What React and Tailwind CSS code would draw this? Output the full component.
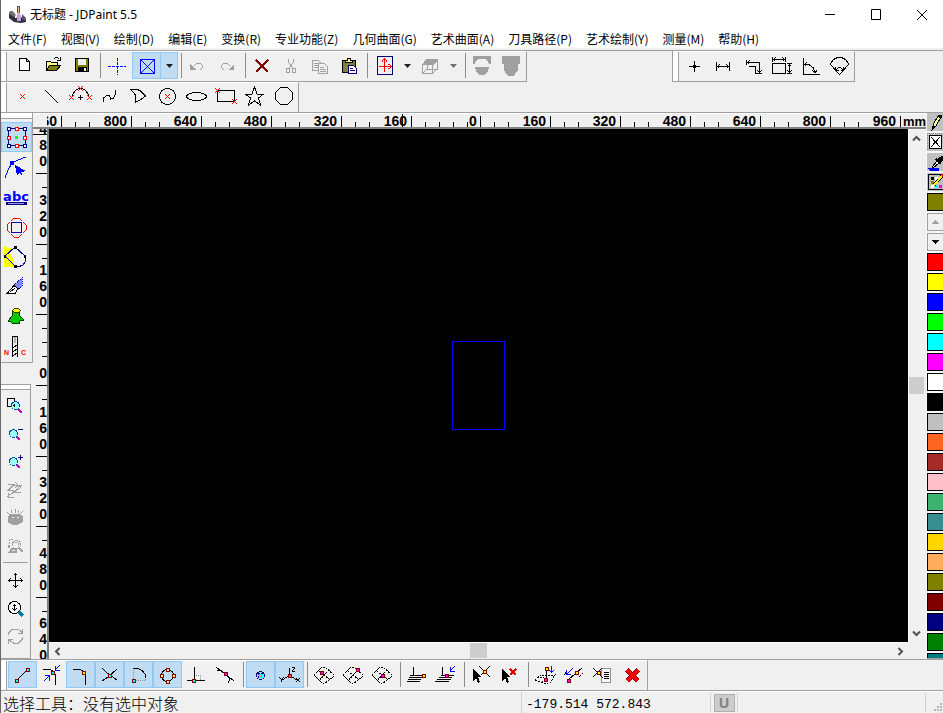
import React from "react";

const sans = "font-['Noto_Sans_CJK_SC','Noto_Sans',sans-serif]";

function Ico({ children }) {
  return (
    <svg viewBox="1 1 23 23" className="block h-[23px] w-[23px] flex-none overflow-visible" fill="none" stroke="#000" strokeWidth="1" shapeRendering="crispEdges" aria-hidden="true">
      {children}
    </svg>
  );
}

/* small square grip used on snap and edit icons */
function Node({ x, y, c = "#0ff", s = "#800000" }) {
  const left = Math.floor(x) - 1;
  const top = Math.floor(y) - 1;
  return (
    <g stroke="none">
      <rect x={left} y={top} width="4" height="4" fill={s} />
      <rect x={left + 1} y={top + 1} width="2" height="2" fill={c} />
    </g>
  );
}

/* five-pixel red cross marking a control point */
function RedX({ x, y }) {
  const cx = Math.floor(x);
  const cy = Math.floor(y);
  const dots = [[-2, -2], [-1, -1], [0, 0], [1, 1], [2, 2], [2, -2], [1, -1], [-1, 1], [-2, 2]];
  return (
    <g stroke="none" fill="#f00">
      {dots.map(([dx, dy]) => (
        <rect key={`${dx},${dy}`} x={cx + dx} y={cy + dy} width="1" height="1" />
      ))}
    </g>
  );
}

const G = "#a0a0a0";

const icons = {
  new: <path d="M7.5 4.5h7l3 3v9h-10zM14.5 4.5v3h3" fill="#fff" />,
  open: (
    <>
      <path d="M5.5 16.5v-9h4l1 1h6v3h-8z" fill="#ffff80" />
      <path d="M5.5 16.5l3-5h11l-4 5z" fill="#808000" />
      <path d="M12.5 5.5l2-2h2l2 2M19.5 3v4M16 6.5h3" />
    </>
  ),
  save: (
    <>
      <rect x="5.5" y="4.5" width="13" height="13" fill="#808000" />
      <rect x="8" y="5" width="8" height="6" fill="#f0f0f0" stroke="none" />
      <rect x="8" y="13" width="9" height="5" fill="#000" stroke="none" />
      <rect x="14" y="14" width="2" height="3" fill="#f0f0f0" stroke="none" />
    </>
  ),
  cross: <path d="M3 12.5h18M12.5 4v17" stroke="#00f" strokeDasharray="3 1" />,
  box: <path d="M6.5 5.5h14v14h-14zM6.5 5.5l14 14M20.5 5.5l-14 14" stroke="#00f" />,
  undo: (
    <g stroke={G}>
      <path d="M4 10v6h6z" fill={G} stroke="none" />
      <path d="M7.500 12.500l3-3h4l2 2v2l-3 3" />
    </g>
  ),
  redo: (
    <g stroke={G}>
      <path d="M19 10v6h-6z" fill={G} stroke="none" />
      <path d="M15.500 12.500l-3-3h-4l-2 2v2l3 3" />
    </g>
  ),
  del: <path d="M6 6l12 12M18 6L6 18" stroke="#800000" strokeWidth="2" />,
  cut: (
    <g stroke={G}>
      <path d="M9.5 5v3l4 6M14.5 5v3l-4 6" />
      <rect x="7.5" y="14.5" width="3" height="4" />
      <rect x="13.5" y="14.5" width="3" height="4" />
    </g>
  ),
  copy: (
    <g stroke={G} fill="#f0f0f0">
      <path d="M4.5 6.5h6l3 3v7h-9zM6 9.5h4M6 11.5h6M6 13.5h6" />
      <path d="M10.5 9.5h6l3 3v7h-9zM12 13.5h4M12 15.5h6M12 17.5h6" />
    </g>
  ),
  paste: (
    <>
      <rect x="5.5" y="6.5" width="13" height="12" fill="#808040" />
      <path d="M8.5 8.5v-2h2v-2h3v2h2v2z" fill="#ffff80" />
      <path d="M11.5 11.5h5l3 3v5h-8z" fill="#fff" stroke="#000080" />
      <path d="M13 14.5h3M13 16.5h5" stroke="#000080" />
    </>
  ),
  axes: (
    <>
      <rect x="5.5" y="2.5" width="15" height="18" fill="#f0f0f0" stroke="#000080" />
      <path d="M7 12.5h12M12.5 5v13M10 7.5l2.5-3 2.5 3M16.5 10l3 2.5-3 2.5" stroke="#f00" />
    </>
  ),
  cube: (
    <>
      <path d="M5 10l4-5h11l-4 5z" fill={G} stroke={G} />
      <path d="M4.5 10.5h10v9h-10zM14.5 19.5l5-5v-9M9.5 6v9h10M9.5 14.5l-5 5" stroke={G} />
    </>
  ),
  halfMask: (
    <g stroke="none" fill={G}>
      <path d="M3 2h18v8h-2l-1-3-3-2h-6l-3 2-1 3H3z" />
      <path d="M5 13h14l-1 4-3 4h-6l-3-4z" />
    </g>
  ),
  mask: <path d="M3 2h18v8h-2v6l-3 4-2 2h-4l-4-3-1-4V10H3z" fill={G} stroke="none" />,
  /* drawing tools */
  point: <RedX x={12.5} y={12.5} />,
  line: <path d="M6 6l13 13" />,
  arc: (
    <>
      <path d="M4.500 12.500v-2l3-4 3-2h4l3 2 3 4v2M10 13.5h5M12.5 11v5" />
      <RedX x={3.5} y={13.5} />
      <RedX x={12.5} y={4.5} />
      <RedX x={21.5} y={13.5} />
    </>
  ),
  spline: <path d="M6.500 18v-4l4-3h2l1 4 3-1 2-4v-4" />,
  poly: <path d="M5 5.5h6l3 1 5 5v1l-4 3-6 3v-8z" />,
  circle: (
    <>
      <circle cx="12.5" cy="12.5" r="8" />
      <RedX x={12.5} y={12.5} />
    </>
  ),
  ellipse: <ellipse cx="12.500" cy="12.5" rx="10" ry="4" />,
  rect: (
    <>
      <rect x="4.5" y="6.5" width="17" height="11" />
      <RedX x={4.5} y={6.5} />
      <RedX x={21.5} y={17.5} />
    </>
  ),
  star: <path d="M12.5 3l2.5 7h6.500l-5 4 2 7-6-4-6 4 2-7-5.500-4h7z" />,
  octagon: <path d="M9.500 3.500h7l5 5v7l-5 5h-7l-5-5v-7z" />,
  /* measuring tools */
  mPoint: <path d="M7 12.500h11M12.500 7v11M11.500 11.500h2v2h-2z" />,
  mWidth: <path d="M5.500 8v9M18.500 8v9M6 12.500h12M8.500 10.500l-2 2 2 2M15.500 10.500l2 2-2 2" />,
  mCorner: <path d="M6.500 6v5M7 8.500h12.500V19M9.500 6.500l-2 2 2 2M17.500 16.500l2 2 2-2M16 19.500h6M9 12.500h6.500v7" />,
  mRect: <path d="M3.500 9.500h13v10h-13zM3.500 3v5M16.500 3v5M4 5.500h12M6.500 3.500l-2 2 2 2M13.500 3.500l2 2-2 2M18 9.500h5M18 19.500h5M20.500 10v9M18.500 12.500l2-2 2 2M18.500 16.500l2 2 2-2" />,
  mAngle: <path d="M5.500 4v16.500H22M6 10.500h5l4 3 2 5M8.500 8.500l-2 2 2 2M14.500 16.500l2.500 2.500 2-3" />,
  mFan: <path d="M3.500 10.500v-1l3-4 4-2h4l4 2 3 4v1l-9 10zM8.500 13v3h3M16.500 13v3h-3M9 15.500l3-2h1l3 2" />,
  /* left toolbox */
  select: (
    <>
      <rect x="4.500" y="3.500" width="17" height="17" stroke="#000080" />
      {[[4.5, 3.5], [20.5, 3.5], [4.5, 20.5], [20.5, 20.5]].map(([x, y]) => (
        <Node key={`${x}-${y}`} x={x} y={y} c="#fff" s="#000080" />
      ))}
      {[[12.5, 3.5], [4.5, 12], [20.5, 12], [12.5, 20.5]].map(([x, y]) => (
        <Node key={`${x}-${y}`} x={x} y={y} c="#fff" s="#f00" />
      ))}
      <rect x="11" y="11" width="3" height="3" fill="#0f0" stroke="none" />
    </>
  ),
  nodeEdit: (
    <>
      <path d="M1 23l3-8 4-7 6-3 8-3" stroke="#00f" />
      <rect x="6" y="6" width="4" height="4" fill="#00f" stroke="none" />
      <path d="M11 10l11 6-5 1 2 5-3-4-3 2z" fill="#00f" stroke="none" />
    </>
  ),
  text: (
    <>
      <text x="12" y="16" textAnchor="middle" fill="#00f" stroke="none" className="font-['DejaVu_Sans',sans-serif] text-[13px] font-bold">abc</text>
      <rect x="2" y="17" width="21" height="3" rx="1" fill="#000080" stroke="none" />
      <path d="M4 18.500h16" stroke="#99f" />
    </>
  ),
  transform: (
    <>
      <rect x="7.500" y="7.500" width="10" height="10" stroke="#0000c0" />
      <path d="M7 6l3-3h5l3 3M19 7l3 3v5l-3 3M18 19l-3 3h-5l-3-3M6 18l-3-3v-5l3-3" stroke="#f00" />
    </>
  ),
  region: (
    <>
      <path d="M0 1l8 3-2 4 4 8-2 2 3 4H0z" fill="#ff0" stroke="none" />
      <path d="M11 2l10 9 1 5-3 4-5 2-3-1-10-10z" stroke="#0000a0" />
      <path d="M10 1h3v3h-3zM0 10h2v3H0zM20 10h2v3h-2zM10 20h3v3h-3z" fill="#000" stroke="none" />
    </>
  ),
  knife: (
    <>
      <path d="M10 10l8-7v8l-4 4z" fill="#8088ff" stroke="#0000c0" strokeDasharray="1 1" />
      <path d="M3 18.500l7-8 4 3-3 5z" fill="#fff" />
      <path d="M6 17l5-4" />
    </>
  ),
  relief: (
    <>
      <path d="M9 6h6l1 5 4 4-4 1-1 3-3-1-3 1-2-2-3-1 4-5z" fill="#00c800" stroke="#004000" />
      <path d="M8.500 5.500l2-2h4l2 2-2 2h-4z" fill="#ff0" stroke="#404000" />
    </>
  ),
  nc: (
    <>
      <path d="M8.500 1v21M13.500 1v21M8.500 1.500h5" />
      <path d="M9 13l4-3M9 17l4-3M9 21l4-3" />
      <path d="M10 2h2v6h-2z" fill="#b0b0b0" stroke="none" />
      <text x="0" y="20" fill="#f00" stroke="none" className="font-['Liberation_Sans',sans-serif] text-[7px] font-bold">N</text>
      <text x="17" y="20" fill="#f00" stroke="none" className="font-['Liberation_Sans',sans-serif] text-[7px] font-bold">C</text>
    </>
  ),
  zoomWin: (
    <>
      <path d="M4.500 5.500h7v8h-7z" />
      <path d="M15 16l4 4" stroke="#c000c0" strokeWidth="2" />
      <circle cx="12.500" cy="12.500" r="4" fill="#9ff" stroke="#0050a0" />
      <path d="M12 10v5l-2-2z" fill="#000" stroke="none" />
    </>
  ),
  zoomOut: (
    <>
      <path d="M13 15l4 4" stroke="#c000c0" strokeWidth="2" />
      <circle cx="10.500" cy="12.500" r="4" fill="#9ff" stroke="#0050a0" />
      <path d="M15 8.500h5" stroke="#000080" />
    </>
  ),
  zoomIn: (
    <>
      <path d="M13 15l4 4" stroke="#c000c0" strokeWidth="2" />
      <circle cx="10.500" cy="12.500" r="4" fill="#9ff" stroke="#0050a0" />
      <path d="M15 8.500h5M17.500 6v5" stroke="#000080" />
    </>
  ),
  zz: <path d="M5 7.500h6l-6 6h6M10 8.500h8l-8 7h8M4 19.500l14-9M5.500 16v4h5M12.500 5.500l3 3-3 2" stroke={G} />,
  eye: (
    <>
      <path d="M5 12l4-3h7l4 3-1 5-4 2H9l-4-2z" fill={G} stroke={G} />
      <path d="M4 7l3 3M8 5l1 3M12.500 4v4M16 5l-1 3M20 6l-3 3" stroke={G} />
      <path d="M9 12.500h2M14 12.500h2" stroke="#f0f0f0" />
    </>
  ),
  lensGray: (
    <>
      <circle cx="13.500" cy="11.500" r="4" stroke={G} />
      <path d="M16 15l4 4M7 19h6v-3H9z" stroke={G} strokeWidth="2" />
      <path d="M10 6.500H6.500v7M5 11.500v3h3M12 9.500h3v4" stroke={G} strokeDasharray="2 1" />
    </>
  ),
  move: <path d="M12.500 5v15M5 12.500h15M10.500 7.500l2-2 2 2M10.500 17.500l2 2 2-2M7.500 10.500l-2 2 2 2M17.500 10.500l2 2-2 2" />,
  zoomDyn: (
    <>
      <path d="M15 15l5 5" stroke="#0080a0" strokeWidth="3" />
      <circle cx="11.500" cy="11.500" r="6" fill="#f8f8f8" />
      <path d="M11.500 8v7M9.500 10.500l2-2 2 2M9.500 12.500l2 2 2-2" />
    </>
  ),
  refresh: <path d="M5.500 11v-2l4-4h5l3 2 2 2M19.500 5v4.500H15M19.500 13v2l-4 4h-5l-3-2-2-2M5.500 20v-5H10" stroke={G} />,
  /* snap tools */
  sEnd: (
    <>
      <path d="M7 17L17 7" />
      <Node x={6.5} y={17.5} />
      <Node x={17.5} y={6.5} />
    </>
  ),
  sNear: (
    <>
      <path d="M4 6.500h7l4 2 1.500 4v9" />
      <path d="M21 2l-4 4M16.500 3v4H21M5 18l5-5M6 12.500h4.500v5" stroke="#00f" />
      <Node x={13.5} y={9.500} />
    </>
  ),
  sCorner: (
    <>
      <path d="M5 6.500h7l4 2 1.500 4v9" />
      <Node x={15.5} y={9.500} c="#ff0" />
    </>
  ),
  sCross: (
    <>
      <path d="M5 5l5 5 10 7M5 18l6-4 9-8" />
      <Node x={12.5} y={12.500} />
    </>
  ),
  sArc: (
    <>
      <path d="M7.500 7v10M8 17.500h11.500v-6" stroke="#909090" strokeDasharray="1 1" />
      <path d="M7 5.500h5l4 2 3.500 4v3" />
      <Node x={7.5} y={17.500} />
    </>
  ),
  sQuad: (
    <>
      <circle cx="12.500" cy="12.500" r="6" />
      <Node x={12.5} y={6.500} c="#ff8" />
      <Node x={6.5} y={12.500} c="#ff8" />
      <Node x={18.5} y={12.500} c="#ff8" />
      <Node x={12.5} y={18.500} c="#ff8" />
    </>
  ),
  sPerp: (
    <>
      <path d="M10.500 4v12M3 17.500h18" />
      <path d="M12 12.500h4.500v4" stroke="#909090" strokeDasharray="1 1" />
      <Node x={9.5} y={17.500} />
    </>
  ),
  sTan: (
    <>
      <path d="M3 4l18 14M4 7.500h4l5 4 3.500 4-1 5" />
      <Node x={12.5} y={10.500} c="#f0f" />
    </>
  ),
  sCenter: (
    <>
      <circle cx="12.500" cy="12.500" r="4" fill="#b0d8ff" stroke="#000080" />
      <path d="M10 10l5 5M15 10l-5 5" stroke="#000080" strokeWidth="2" />
      <Node x={12} y={12} c="#f88" s="#0ff" />
    </>
  ),
  sAxis: (
    <>
      <path d="M12.500 5v7l-7 5M12.500 12l7 5M15 4.500h3M15 8.500h3M17.500 5l-2 3M2 14l2.500 2.500L7 14M4.500 16v3M19 15l4 4M23 15l-4 4" />
      <Node x={12} y={12} c="#f44" />
    </>
  ),
  sWork: (
    <>
      <path d="M8.500 4v9" />
      <path d="M5 12.500h13M4 14.500h13M3 16.500h13M2 18.500h13" />
      <Node x={18.500} y={12.500} c="#ff0" />
    </>
  ),
  sProj: (
    <>
      <path d="M8.500 4v9M7 12.500h13M5 14.500h13M3 16.500h14M1 18.500h14" />
      <path d="M21 3l-5 5M16.500 4v4h4" stroke="#00f" />
      <Node x={12.500} y={12} c="#f0f" />
    </>
  ),
  pick: (
    <>
      <path d="M10 3l11 11M21 3l-9 9" />
      <path d="M4 6l8 8H9l2 5-2 1-2-5-3 3z" fill="#000" stroke="none" />
      <Node x={15.500} y={8.500} c="#ff0" />
    </>
  ),
  unpick: (
    <>
      <path d="M4 6l8 8H9l2 5-2 1-2-5-3 3z" fill="#000" stroke="none" />
      <path d="M12 6l6 6M18 6l-6 6" stroke="#e00000" strokeWidth="2" />
    </>
  ),
  dropPt: (
    <>
      <path d="M13.500 7v8" />
      <path d="M2 17l6-5 4 1 10-1-5 8-3 1-6-2zM7 15l4-1M9 19l4-5" strokeDasharray="2 1" />
      <path d="M18.500 3v7M16.500 7.500l2 2 2-2" stroke="#00f" />
      <Node x={12.500} y={16.500} c="#f0f" />
      <Node x={13} y={5} c="#ff0" />
    </>
  ),
  onLine: (
    <>
      <path d="M6 17L20 5" />
      <path d="M2 12l3-4M17 14l4-4" strokeDasharray="1 1" />
      <path d="M11 5l-6 6M4.500 7v4.500H9" stroke="#00f" />
      <Node x={6.500} y={17.500} c="#f0f" />
      <Node x={14.500} y={9.500} c="#ff0" />
    </>
  ),
  props: (
    <>
      <path d="M10.500 5.500h9v14h-9z" fill="#f8f8f8" stroke="#909090" />
      <path d="M13 9.500h5M13 11.500h5M13 13.500h5M13 15.500h5M2 5l10 10M2 14l9-9" />
      <Node x={7} y={9} c="#ff0" />
    </>
  ),
  close: (
    <>
      <path d="M7 7l11 11M18 7L7 18" stroke="#800000" strokeWidth="5" />
      <path d="M7 7l11 11M18 7L7 18" stroke="#f00" strokeWidth="4" />
    </>
  ),
};

function meshIcon(x, y) {
  return (
    <>
      <path d="M2 12l3-3 5-5 4 1 7 6 1 2-10 8-4-3zM7 8l5 4 6 5M17 7l-5 5-5 6" strokeDasharray="2 1" />
      <Node x={x} y={y} c="#f0f" />
    </>
  );
}
icons.mesh1 = meshIcon(9, 9);
icons.mesh2 = meshIcon(16, 6);
icons.mesh3 = meshIcon(12, 12);

function Tool({ icon, label, on, className = "h-[27px] w-[29px] items-end" }) {
  return (
    <button
      type="button"
      aria-label={label}
      aria-pressed={!!on}
      className={`flex flex-none justify-center border ${on ? "border-[#90c8f6] bg-[#c0dcf3]" : "border-transparent"} ${className}`}
    >
      <Ico>{icons[icon]}</Ico>
    </button>
  );
}

function Drop({ label, on, dim }) {
  return (
    <button
      type="button"
      aria-label={label}
      className={`flex h-[27px] w-[17px] flex-none items-center justify-center border ${on ? "border-l-0 border-[#90c8f6] bg-[#c0dcf3]" : "border-transparent"}`}
    >
      <svg viewBox="0 0 7 4" className="block h-1 w-[7px]" fill={dim ? "#707070" : "#202020"} aria-hidden="true">
        <path d="M0 0h7L3.500 4z" />
      </svg>
    </button>
  );
}

function Sep() {
  return (
    <span className="flex h-[27px] w-[6px] flex-none items-center justify-center">
      <span className="h-[25px] w-px bg-[#8c8c8c]" />
    </span>
  );
}

/* items: [icon, label, pressed], "|" for a divider, ["v", label, pressed, dim] for a drop arrow */
function Tools({ items, toolClass }) {
  return items.map((it, i) => {
    if (it === "|") return <Sep key={i} />;
    if (it[0] === "v") return <Drop key={i} label={it[1]} on={it[2]} dim={it[3]} />;
    return <Tool key={i} icon={it[0]} label={it[1]} on={it[2]} className={toolClass} />;
  });
}

function Bar({ items, label, pad = "", toolClass }) {
  return (
    <div role="toolbar" aria-label={label} className="flex h-[31px] border-b border-t border-r border-b-[#a0a0a0] border-r-[#a0a0a0] border-t-white">
      <span className="mr-px w-[6px] flex-none border-r border-[#a0a0a0] bg-white" />
      <div className={`flex items-start ${pad}`}>
        <Tools items={items} toolClass={toolClass} />
      </div>
    </div>
  );
}

const standard = [
  ["new", "新建"], ["open", "打开"], ["save", "保存"], "|",
  ["cross", "十字光标"], ["box", "选择框", true], ["v", "选择框选项", true], "|",
  ["undo", "撤销"], ["redo", "重做"], "|",
  ["del", "删除"], ["cut", "剪切"], ["copy", "复制"], ["paste", "粘贴"], "|",
  ["axes", "坐标"], ["v", "坐标选项"], ["cube", "视图"], ["v", "视图选项", false, true], "|",
  ["halfMask", "半遮罩"], ["mask", "遮罩"],
];
const drawing = [
  ["point", "点"], ["line", "直线"], ["arc", "圆弧"], ["spline", "样条"], ["poly", "多边线"],
  ["circle", "圆"], ["ellipse", "椭圆"], ["rect", "矩形"], ["star", "星形"], ["octagon", "多边形"],
];
const measuring = [
  ["mPoint", "点坐标"], ["mWidth", "距离"], ["mCorner", "折线"], ["mRect", "尺寸"], ["mAngle", "角度"], ["mFan", "扇形"],
];
const snapping = [
  ["sEnd", "端点", true], ["sNear", "最近点"], ["sCorner", "拐点", true], ["sCross", "交点", true],
  ["sArc", "圆心", true], ["sQuad", "象限点", true], ["sPerp", "垂足"], ["sTan", "切点"], "|",
  ["sCenter", "中心", true], ["sAxis", "坐标轴", true], "|",
  ["mesh1", "曲面点"], ["mesh2", "曲面角点"], ["mesh3", "曲面中心"], "|",
  ["sWork", "工作面"], ["sProj", "投影"], "|",
  ["pick", "拾取"], ["unpick", "取消拾取"], "|",
  ["dropPt", "落点"], ["onLine", "线上点"], ["props", "属性"], ["close", "关闭"],
];

const menus = [
  "文件(F)", "视图(V)", "绘制(D)", "编辑(E)", "变换(R)", "专业功能(Z)",
  "几何曲面(G)", "艺术曲面(A)", "刀具路径(P)", "艺术绘制(Y)", "测量(M)", "帮助(H)",
];

const topScale = ["800", "640", "480", "320", "160", "0", "160", "320", "480", "640", "800", "960"];
const sideScale = [
  ["320", "h-[71px]"], ["160", "h-[70px]"], ["0", "h-[71px]"], ["160", "h-[71px]"],
  ["320", "h-[70px]"], ["480", "h-[71px]"], ["640", "h-[70px]"],
];

const palette = [
  "bg-[#ff0000]", "bg-[#ffff00]", "bg-[#0000ff]", "bg-[#00ff00]", "bg-[#00ffff]", "bg-[#ff00ff]", "bg-white",
  "bg-black", "bg-[#c0c0c0]", "bg-[#ff6622]", "bg-[#a52a2a]", "bg-[#ffc0cb]", "bg-[#3cb371]", "bg-[#388e8e]",
  "bg-[#ffd700]", "bg-[#ffad5c]", "bg-[#808000]", "bg-[#800000]", "bg-[#000080]", "bg-[#008000]", "bg-[#008080]",
];

function TopRuler() {
  return (
    <div className="relative flex h-4 items-end overflow-hidden border-b-2 border-t border-b-[#808080] border-t-white font-['Liberation_Sans',sans-serif] text-sm font-bold leading-[11px]">
      <div className="flex h-[11px] w-[29px] flex-none justify-end overflow-hidden border-r border-black pl-[14px]">
        <span className="flex w-[14px] justify-end overflow-hidden pr-1">960</span>
      </div>
      {topScale.map((n, i) => (
        <div key={i} className={`flex h-[11px] flex-none items-end border-r border-black ${n === "0" ? "w-[69px]" : "w-[70px]"}`}>
          {(n === "0" ? [1, 2, 3, 4] : [1, 2]).map((t) => (
            <span key={t} className="h-[5px] w-[14px] flex-none border-r border-black" />
          ))}
          <span className={n === "0" ? "pl-px" : "ml-auto pr-1"}>{n}</span>
        </div>
      ))}
      <span className="pl-0.5 text-[13px]">mm</span>
      <span className="absolute left-[369px] top-0 h-4 w-px bg-black" />
    </div>
  );
}

function Digits({ n }) {
  return (
    <span className="mt-auto flex flex-col pb-1 text-center leading-4">
      {n.split("").map((d, i) => (
        <span key={i}>{d}</span>
      ))}
    </span>
  );
}

function SideRuler() {
  return (
    <div className="relative flex w-4 flex-none flex-col overflow-hidden border-r-2 border-[#808080] pl-[3px] font-['Liberation_Sans',sans-serif] text-sm font-bold">
      <div className="flex h-[45px] flex-none flex-col items-end justify-end border-b border-black">
        <Digits n="480" />
      </div>
      {sideScale.map(([n, h], i) => (
        <div key={i} className={`flex flex-none flex-col items-end border-b border-black ${h}`}>
          {(n === "0" ? [1, 2, 3] : [1]).map((t) => (
            <span key={t} className="h-[14px] w-[5px] flex-none border-b border-black" />
          ))}
          <Digits n={n} />
        </div>
      ))}
      <span className="absolute left-0 top-[5px] h-px w-4 bg-black" />
    </div>
  );
}

function Arrow({ d, label, className }) {
  return (
    <button type="button" aria-label={label} className={`flex flex-none items-center justify-center ${className}`}>
      <svg viewBox="0 0 9 9" className="block h-[9px] w-[9px]" fill="none" stroke="#505050" strokeWidth="2" aria-hidden="true">
        <path d={d} />
      </svg>
    </button>
  );
}

function PaletteTool({ label, className = "bg-[#c0c0c0]", children }) {
  return (
    <button type="button" aria-label={label} className={`flex h-[18px] w-[18px] flex-none items-center justify-center ${className}`}>
      <svg viewBox="0 0 18 18" className="block h-[18px] w-[18px] flex-none" fill="none" stroke="#000" shapeRendering="crispEdges" aria-hidden="true">
        {children}
      </svg>
    </button>
  );
}

function Palette() {
  return (
    <div className="flex w-4 flex-none flex-col gap-[2px] overflow-hidden border-b border-[#a0a0a0] bg-[#f8f8f8]">
      <PaletteTool label="画笔">
        <path d="M6 12l5-9 3 1-5 9-3 3z" fill="#ff8" />
        <path d="M11 3l1-1 3 1-1 2z" fill="#800000" />
        <path d="M5 17l1-4 2 1z" fill="#000" />
      </PaletteTool>
      <PaletteTool label="无填充">
        <rect x="2.500" y="2.500" width="12" height="13" fill="#fff" />
        <path d="M4 4l9 10M13 4L4 14" />
        <path d="M0 .5h18M.5 0v18" stroke="#808080" strokeDasharray="1 1" />
      </PaletteTool>
      <PaletteTool label="吸管">
        <path d="M1 15h10v2H3z" fill="#00f" stroke="#00f" />
        <path d="M5 14l5-6 2 2-6 5z" fill="#fff" />
        <path d="M9 6l5 5M12 6l3-2 1 1-2 3z" fill="#000" strokeWidth="2" />
      </PaletteTool>
      <PaletteTool label="调色板">
        <rect x="1.500" y="1.500" width="15" height="15" fill="#c0c0c0" />
        <path d="M4 4h3v3H4z" fill="#000" stroke="none" />
        <path d="M4 8h3v3H4z" fill="#808000" stroke="none" />
        <path d="M8 4h3v3H8zM4 12h3v3H4z" fill="#fff" stroke="none" />
        <path d="M8 12h3v3H8z" fill="#0ff" stroke="none" />
        <path d="M12 12h3v3h-3z" fill="#f0f" stroke="none" />
        <path d="M7 12l8-9" strokeWidth="3" />
        <path d="M7 12l8-9" stroke="#ff0" strokeWidth="2" />
        <path d="M15 1h3v3h-3z" fill="#f00" stroke="none" />
      </PaletteTool>
      <button type="button" aria-label="当前颜色" className="h-[18px] w-[18px] flex-none border border-black bg-[#808000]" />
      <PaletteTool label="上一页" className="border border-[#a0a0a0] bg-[#f0f0f0]">
        <path d="M5 10.500h7M6 9.500h5M7 8.500h3M8 7.500h1" stroke="#a0a0a0" />
      </PaletteTool>
      <PaletteTool label="下一页" className="border border-[#a0a0a0] bg-[#f0f0f0]">
        <path d="M5 7.500h7M6 8.500h5M7 9.500h3M8 10.500h1" />
      </PaletteTool>
      {palette.map((c) => (
        <button key={c} type="button" aria-label="颜色" className={`h-[18px] w-[18px] flex-none border border-black ${c}`} />
      ))}
    </div>
  );
}

const editTools = [
  ["select", "选择工具", true], ["nodeEdit", "节点编辑"], ["text", "文字"], ["transform", "变换"],
  ["region", "区域"], ["knife", "裁剪"], ["relief", "浮雕"], ["nc", "数控"],
];
const viewTools = [
  ["zoomWin", "窗口缩放"], ["zoomOut", "缩小"], ["zoomIn", "放大"], ["zz", "上次视图"], ["eye", "全部显示"], ["lensGray", "选择观察"],
];
const panTools = [["move", "平移"], ["zoomDyn", "动态缩放"], ["refresh", "刷新"]];

function Toolbox() {
  return (
    <div className="flex w-8 flex-none flex-col">
      <div className="flex flex-col border-b border-r border-[#a0a0a0]">
        <span className="mb-[3px] h-[6px] border-b border-[#a0a0a0] bg-white" />
        {editTools.map(([icon, label, on]) => (
          <Tool key={icon} icon={icon} label={label} on={on} className="h-[30px] w-full items-center pt-px" />
        ))}
      </div>
      <div className="mr-[2px] mt-[21px] flex flex-1 flex-col border-b border-r border-t border-[#a0a0a0]">
        <span className="mb-px h-[5px] border-b border-[#a0a0a0] bg-white" />
        {viewTools.map(([icon, label]) => (
          <Tool key={icon} icon={icon} label={label} className="h-7 w-full items-center pt-px" />
        ))}
        <span className="mx-[2px] my-[3px] h-px bg-[#a0a0a0]" />
        {panTools.map(([icon, label]) => (
          <Tool key={icon} icon={icon} label={label} className="h-7 w-full items-center pt-px" />
        ))}
      </div>
    </div>
  );
}

function Caption({ label, d }) {
  return (
    <button type="button" aria-label={label} className="flex w-[46px] items-center justify-center pl-1">
      <svg viewBox="0 0 12 12" className="block h-3 w-3" fill="none" stroke="#000" aria-hidden="true">
        <path d={d} />
      </svg>
    </button>
  );
}

export default function App() {
  return (
    <div className={`flex h-screen flex-col overflow-hidden border-l border-[#696969] bg-[#f0f0f0] text-black ${sans}`}>
      <header className="bg-white">
        <div className="flex h-[29px] items-stretch">
          <div className="flex flex-1 items-center gap-1 pl-2">
            <svg viewBox="0 0 17 17" className="block h-[17px] w-[17px]" aria-hidden="true">
              <path d="M0 6l3-1 3 3v4l6-1 5 2v3l-5 1-7-1-5-4z" fill="#303038" />
              <path d="M0 6l3-1 4 4-2 2-5-3z" fill="#707078" />
              <path d="M8 0h3v7H8z" fill="#505058" />
              <path d="M9 1h1v8H9z" fill="#e8c070" />
              <path d="M8 8l3-1 1 4v4H8z" fill="#c8a0e8" />
              <path d="M13 8l4 4v3l-4-2z" fill="#585860" />
            </svg>
            <h1 className="font-['Noto_Sans','Noto_Sans_CJK_SC',sans-serif] text-xs">无标题 - JDPaint 5.5</h1>
          </div>
          <Caption label="最小化" d="M1 5.500h10" />
          <Caption label="最大化" d="M1.500 .5h9v10h-9z" />
          <Caption label="关闭窗口" d="M1 1l10 10M11 1L1 11" />
        </div>
        <nav className="flex h-[19px] items-center gap-[14px] pl-[7px] text-xs">
          {menus.map((m) => (
            <button key={m} type="button" className="flex-none whitespace-nowrap leading-[19px]">
              {m}
            </button>
          ))}
        </nav>
      </header>
      <div className="mt-[2px] flex border-t border-[#a0a0a0]">
        <Bar items={standard} label="标准" pad="pl-[2px]" />
        <div className="ml-auto mr-[88px] border-l border-[#a0a0a0]">
          <Bar items={measuring} label="测量" />
        </div>
      </div>
      <div className="flex border-b border-[#a0a0a0]">
        <div className="-mb-px flex">
          <Bar items={drawing} label="绘图" toolClass="h-[27px] w-[29px] items-center" />
        </div>
      </div>

      <main className="flex min-h-0 flex-1 border-b border-[#a0a0a0]">
        <Toolbox />
        <div className="flex min-w-0 flex-1 flex-col">
          <TopRuler />
          <div className="flex min-h-0 flex-1">
            <SideRuler />
            <div className="flex min-w-0 flex-1 flex-col">
              <div className="flex min-h-0 flex-1">
                <div className="flex flex-1 items-center justify-center bg-black">
                  <div className="h-[89px] w-[53px] border border-[#0000ff]" />
                </div>
                <div className="flex w-[18px] flex-none flex-col border-l border-white pr-[2px]">
                  <Arrow label="向上滚动" d="M1 6.500L4.500 3 8 6.500" className="h-[18px]" />
                  <div className="flex flex-1 items-center">
                    <span className="h-[17px] w-[15px] bg-[#cdcdcd]" />
                  </div>
                  <Arrow label="向下滚动" d="M1 2.500L4.500 6 8 2.500" className="h-[18px]" />
                </div>
              </div>
              <div className="mr-[18px] flex h-[17px] flex-none border-t border-white">
                <Arrow label="向左滚动" d="M6.500 1L3 4.500 6.500 8" className="w-4" />
                <div className="flex flex-1 justify-center">
                  <span className="h-[15px] w-[17px] bg-[#cdcdcd]" />
                </div>
                <Arrow label="向右滚动" d="M2.500 1L6 4.500 2.500 8" className="w-4" />
              </div>
            </div>
          </div>
        </div>
        <span className="w-px flex-none bg-[#fafafa]" />
        <Palette />
      </main>

      <div className="flex border-b border-[#a0a0a0]">
        <div className="-mb-px flex">
          <Bar items={snapping} label="捕捉" />
        </div>
      </div>

      <footer className="flex h-[22px] flex-none items-center border-t border-white">
        <p className="flex-1 pl-[2px] text-base font-light leading-[22px]">选择工具：没有选中对象</p>
        <p className="w-[189px] border-l border-[#d0d0d0] pl-1 pt-1 font-['Liberation_Mono',monospace] text-[13px] leading-[17px]">-179.514 572.843</p>
        <div className="flex h-[19px] w-7 justify-center border-x border-[#d0d0d0] pt-px">
          <span className="flex h-[18px] w-[21px] items-center justify-center border border-[#b0b0b0] bg-[#cccccc] font-['Liberation_Sans',sans-serif] text-sm font-bold text-[#808080]">U</span>
        </div>
        <div className="h-[19px] w-[188px] border-r border-[#d0d0d0]" />
        <svg viewBox="0 0 17 19" className="block h-[19px] w-[17px]" fill="#b8b8b8" aria-hidden="true">
          <path d="M14 10h2v2h-2zM11 13h2v2h-2zM14 13h2v2h-2zM8 16h2v2H8zM11 16h2v2h-2zM14 16h2v2h-2z" />
        </svg>
      </footer>
    </div>
  );
}
